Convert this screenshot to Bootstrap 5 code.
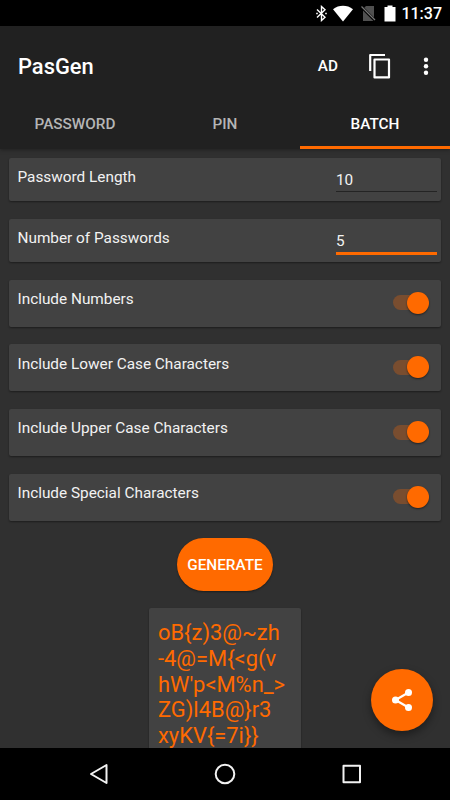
<!DOCTYPE html>
<html lang="en" data-bs-theme="dark">
<head>
<meta charset="utf-8">
<meta name="viewport" content="width=device-width, initial-scale=1">
<title>PasGen</title>
<link href="https://cdn.jsdelivr.net/npm/bootstrap@5.3.0/dist/css/bootstrap.min.css" rel="stylesheet">
<style>
  :root { --accent: #ff6a00; }
  body { font-family: Roboto, "Liberation Sans", sans-serif; background: #303030; color: #f2f2f2; height: 800px; }
  svg { display: block; flex: none; }
  .status-bar { height: 26px; background: #000; padding-right: 8px; font-size: 16px; font-weight: 500; line-height: 26px; }
  .status-bar span { padding-top: 2px; }
  .wifi-icon { margin-left: 6px; }
  .app-header { background: #212121; height: 123px; box-shadow: 0 1px 4px rgba(0,0,0,.35); z-index: 1; }
  .app-bar { height: 80px; padding: 1px 17px 0 18px; }
  .app-title { font-size: 21.9px; font-weight: 500; line-height: 26px; color: #fff; padding-top: 1px; }
  .app-ad { font-size: 15.3px; font-weight: 500; color: #fff; }
  .copy-icon { margin: 0 18px 2px 23px; }
  .tabs-row .nav-link { height: 43px; padding: 7.5px 0 0; font-size: 15.3px; font-weight: 500; line-height: 20px; color: #b5b5b5; border-bottom: 3px solid transparent; border-radius: 0; }
  .tabs-row .nav-link.active { color: #fff; border-bottom-color: var(--accent); }
  .content-area { padding: 8.5px 9px 0; min-height: 0; }
  .option { background: #424242; border: 0; border-radius: 2px; box-shadow: 0 1px 2px rgba(0,0,0,.4); font-size: 15.35px; line-height: 18px; color: #f2f2f2; flex: none; padding: 10.500px 4px 0 8.500px; }
  .option-entry { height: 43.5px; margin-bottom: 17.5px; }
  .option-switch { height: 47px; margin-bottom: 17.7px; padding-right: 12.4px; }
  .entry { width: 101px; height: 23px; margin-top: .5px; padding: 0; border: 0; border-bottom: 1px solid #242424; border-radius: 0; background: transparent; color: #f2f2f2; font-size: 15.3px; line-height: 18px; }
  .entry.active-entry { height: 25px; border-bottom: 3px solid var(--accent); }
  .toggle { width: 36px; height: 22px; margin-top: 1.7px; }
  .toggle::before { content: ""; width: 32px; height: 15px; border-radius: 8px; background: #794d2f; }
  .toggle::after { content: ""; width: 22px; height: 22px; margin-left: -18px; border-radius: 50%; background: var(--accent); box-shadow: 0 1px 2px rgba(0,0,0,.5); flex: none; }
  .generate { width: 96px; height: 53px; padding: 2px 0 0; border: 0; border-radius: 27px; background: var(--accent); color: #fff; font-size: 15.3px; font-weight: 500; box-shadow: 0 1px 2px rgba(0,0,0,.4); flex: none; }
  .result { width: 152px; height: 200px; margin-top: 17px; padding: 12px 8px 0 9px; border: 0; border-radius: 2px; background: #424242; color: var(--accent); font-size: 21.9px; line-height: 25.7px; box-shadow: 0 1px 2px rgba(0,0,0,.4); flex: none; }
  .share { width: 62px; height: 62px; right: 17px; bottom: 17px; background: var(--accent); box-shadow: 0 4px 9px rgba(0,0,0,.4); padding: 0; border: 0; }
  .system-nav { height: 52px; background: #000; padding: 0 88px; }
</style>
</head>
<body class="d-flex flex-column overflow-hidden">
  <div class="status-bar d-flex align-items-center justify-content-end flex-shrink-0 text-white">
    <svg width="11" height="17" viewBox="0 0 11 17" fill="none" stroke="#fff" stroke-width="1.4"><path d="M1 4.5 9 12.2 5.500 15.500V1.500L9 4.800 1 12.500"/><path d="M.2 8.500h1.600M9.200 8.500h1.600" stroke-width="1.600"/></svg>
    <svg class="wifi-icon" width="20" height="17" viewBox="0 0 20 17"><path fill="#fff" d="M0 4.200C5.800-.3 14.200-.3 20 4.200L10 16.500z"/></svg>
    <svg class="ms-2" width="15" height="17" viewBox="0 0 15 17"><path fill="#505050" d="M5 1h8v15H2V4z"/><path d="M.5 2 14 15.500" stroke="#000" stroke-width="3"/><path d="M.5 1.500 14 15" stroke="#777" stroke-width="1.300"/></svg>
    <svg class="ms-2" width="13" height="17" viewBox="0 0 13 17"><path fill="#fff" d="M3.500 .5h5V2h3v14.500H.5V2h3z"/></svg>
    <span class="ms-1">11:37</span>
  </div>

  <header class="app-header flex-shrink-0 position-relative">
    <div class="app-bar d-flex align-items-center">
      <div class="app-title me-auto">PasGen</div>
      <span class="app-ad">AD</span>
      <svg class="copy-icon" width="40" height="26" viewBox="0 0 40 26" fill="none" stroke="#fff" stroke-width="2.200" stroke-linejoin="round"><path d="M9.200 18V2H24"/><path d="M13.500 6.500h14.500v17.900h-14.500z"/></svg>
      <svg width="14" height="20" viewBox="0 0 14 20" fill="#fff"><circle cx="7" cy="2.700" r="2.200"/><circle cx="7" cy="9.200" r="2.200"/><circle cx="7" cy="15.700" r="2.200"/></svg>
    </div>
    <nav class="tabs-row nav nav-fill nav-justified">
      <a class="nav-link" href="#">PASSWORD</a>
      <a class="nav-link" href="#">PIN</a>
      <a class="nav-link active" href="#">BATCH</a>
    </nav>
  </header>

  <main class="content-area d-flex flex-column flex-grow-1 position-relative overflow-hidden">
    <div class="card option option-entry flex-row justify-content-between"><span>Password Length</span><input class="entry" type="text" value="10" aria-label="Password Length"></div>
    <div class="card option option-entry flex-row justify-content-between"><span>Number of Passwords</span><input class="entry active-entry" type="text" value="5" aria-label="Number of Passwords"></div>
    <div class="card option option-switch flex-row justify-content-between"><span>Include Numbers</span><span class="toggle d-flex align-items-center"></span></div>
    <div class="card option option-switch flex-row justify-content-between"><span>Include Lower Case Characters</span><span class="toggle d-flex align-items-center"></span></div>
    <div class="card option option-switch flex-row justify-content-between"><span>Include Upper Case Characters</span><span class="toggle d-flex align-items-center"></span></div>
    <div class="card option option-switch flex-row justify-content-between"><span>Include Special Characters</span><span class="toggle d-flex align-items-center"></span></div>
    <button class="btn generate align-self-center" type="button">GENERATE</button>
    <div class="card result align-self-center text-nowrap"><div>oB{z)3@~zh<br>-4@=M{&lt;g(v<br>hW'p&lt;M%n_&gt;<br>ZG)l4B@}r3<br>xyKV{=7i}}</div></div>
    <button class="btn share rounded-circle position-absolute d-flex align-items-center justify-content-center" type="button" aria-label="Share">
      <svg width="22" height="24" viewBox="0 0 22 24" fill="#fff"><path d="M17.500 4.500 4.500 12l13 7.500" fill="none" stroke="#fff" stroke-width="2.200"/><circle cx="17.500" cy="4.500" r="3.500"/><circle cx="4.500" cy="12" r="3.500"/><circle cx="17.500" cy="19.500" r="3.500"/></svg>
    </button>
  </main>

  <footer class="system-nav d-flex align-items-center justify-content-between flex-shrink-0">
    <svg width="21" height="22" viewBox="0 0 21 22" fill="none" stroke="#f2f2f2" stroke-width="2" stroke-linejoin="round"><path d="M18.500 2v18L3 11z"/></svg>
    <svg width="22" height="22" viewBox="0 0 22 22" fill="none" stroke="#f2f2f2" stroke-width="2"><circle cx="11" cy="11" r="9.300"/></svg>
    <svg width="21" height="22" viewBox="0 0 21 22" fill="none" stroke="#f2f2f2" stroke-width="2" stroke-linejoin="round"><path d="M2.500 2.700h16.500v16.600H2.500z"/></svg>
  </footer>
<script src="https://cdn.jsdelivr.net/npm/bootstrap@5.3.0/dist/js/bootstrap.bundle.min.js"></script>
</body>
</html>
